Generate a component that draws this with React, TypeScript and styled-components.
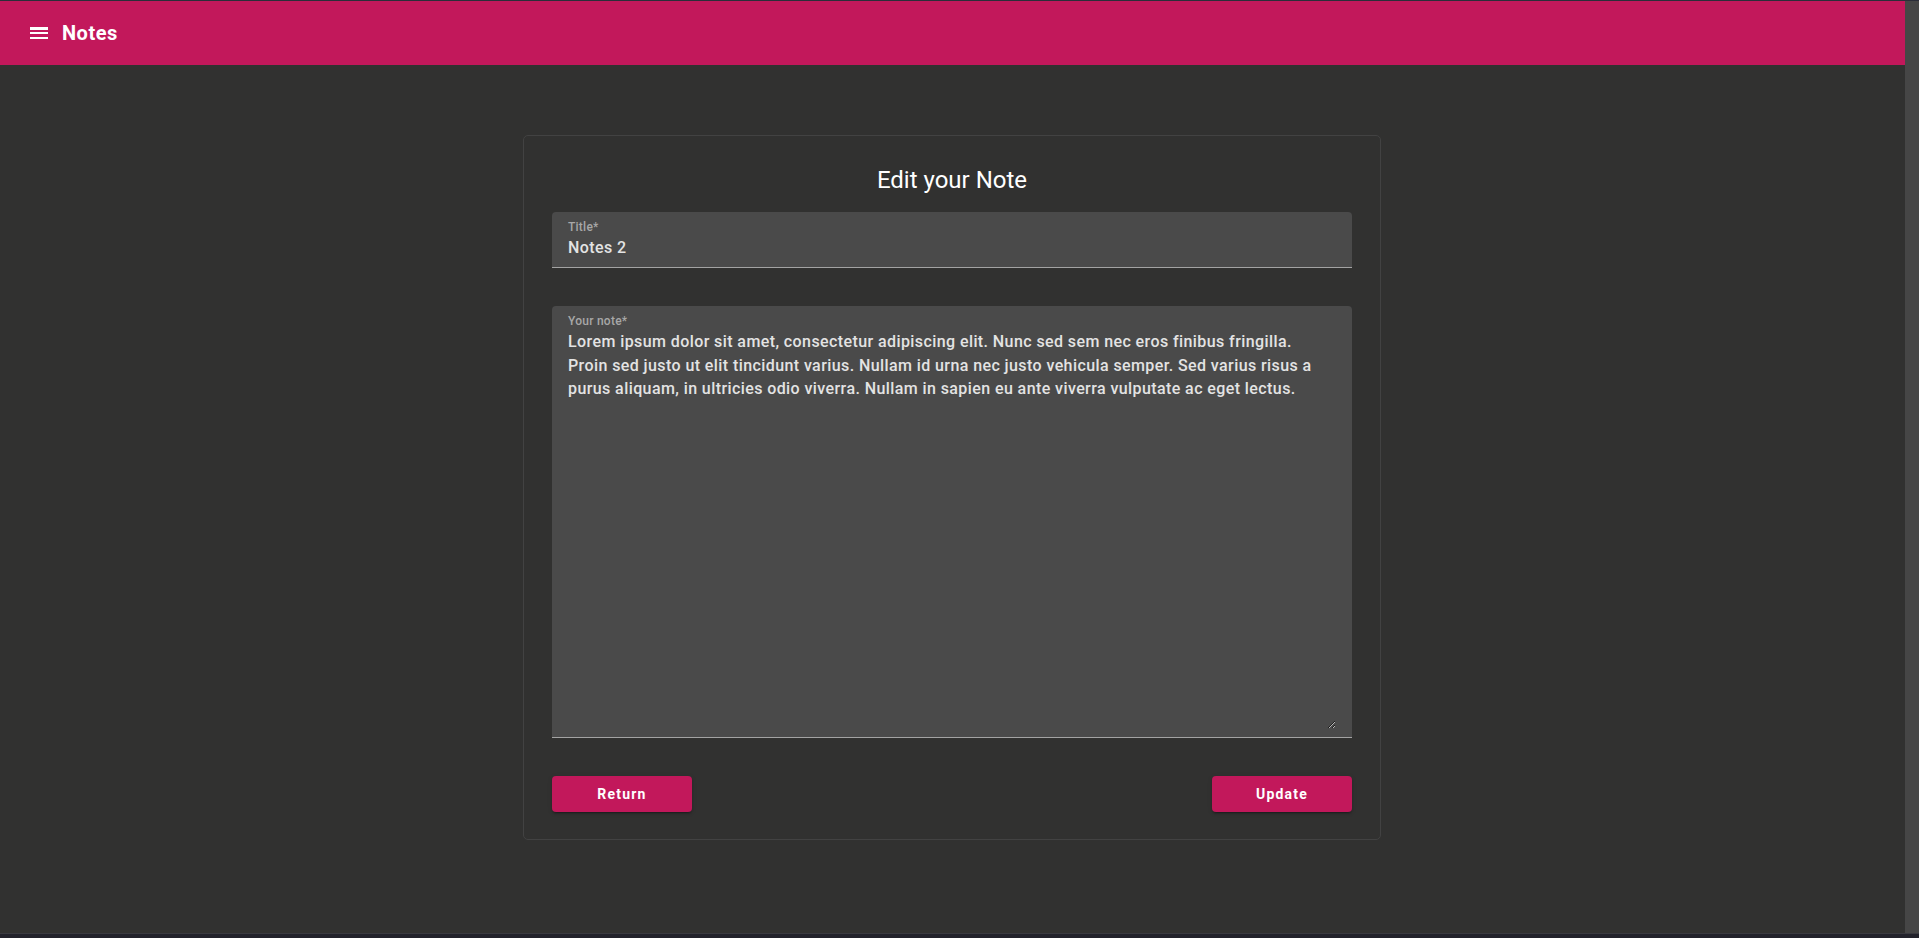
import React from "react";
import styled, { createGlobalStyle } from "styled-components";

const GlobalStyle = createGlobalStyle`
  html, body {
    margin: 0;
    padding: 0;
    height: 100%;
    overflow: hidden;
    background: #313130;
    font-family: Roboto, "Liberation Sans", Arial, sans-serif;
  }
  #root { height: 100%; }
  * { box-sizing: border-box; }
`;

const Frame = styled.div`
  height: 100vh;
  display: flex;
  flex-direction: column;
`;

const TopEdge = styled.div`
  height: 1px;
  background: #2b2d39;
  flex: none;
`;

const BottomEdge = styled.div`
  height: 5px;
  background: #22222b;
  border-top: 1px solid #3a3a40;
  flex: none;
`;

const Window = styled.div`
  flex: 1;
  display: flex;
  min-height: 0;
`;

const Viewport = styled.div`
  flex: 1;
  display: flex;
  flex-direction: column;
  background: #313130;
`;

const ScrollTrack = styled.div`
  width: 14px;
  flex: none;
  background: #464646;
`;

const AppBar = styled.header`
  height: 64px;
  flex: none;
  background: #c2185b;
  display: flex;
  align-items: center;
  padding-left: 27px;
  gap: 11px;
  color: #fff;
`;

const MenuIcon = styled.svg`
  width: 24px;
  height: 24px;
  fill: #fff;
  display: block;
`;

const Brand = styled.h1`
  margin: 0;
  font-size: 20px;
  font-weight: 700;
  line-height: 1.6;
  letter-spacing: 0.5px;
`;

const Content = styled.main`
  display: flex;
  justify-content: center;
  padding-top: 70px;
  padding-right: 1px;
`;

const Card = styled.form`
  width: 858px;
  border: 1px solid #424242;
  border-radius: 5px;
  padding: 28px 28px 27px;
  display: flex;
  flex-direction: column;
`;

const Heading = styled.h2`
  margin: 0 0 16px;
  text-align: center;
  color: #fff;
  font-size: 24px;
  font-weight: 400;
  line-height: 32px;
`;

const Field = styled.label`
  display: flex;
  flex-direction: column;
  gap: 2px;
  background: #4a4a4a;
  border-radius: 4px 4px 0 0;
  border-bottom: 1px solid #a3a3a3;
  padding: 8px 16px 8px;
  margin-bottom: 38px;
`;

const FieldLabel = styled.span`
  font-size: 12px;
  line-height: 14px;
  font-weight: 500;
  letter-spacing: 0.25px;
  color: #a7a7a7;
`;

const TextInput = styled.input`
  border: 0;
  outline: none;
  background: transparent;
  padding: 0;
  margin: 0;
  font-family: inherit;
  font-size: 16px;
  font-weight: 500;
  letter-spacing: 0.4px;
  line-height: 23px;
  height: 23px;
  color: #e3e3e3;
`;

const TextArea = styled.textarea`
  border: 0;
  outline: none;
  background: transparent;
  padding: 0;
  margin: 0;
  font-family: inherit;
  font-size: 16px;
  font-weight: 500;
  letter-spacing: 0.41px;
  line-height: 23.7px;
  height: 399px;
  color: #e3e3e3;
  resize: vertical;
  color-scheme: dark;
`;

const Actions = styled.div`
  display: flex;
  justify-content: space-between;
`;

const Button = styled.button`
  width: 140px;
  height: 36px;
  border: 0;
  border-radius: 4px;
  background: #c2185b;
  color: #fff;
  font-family: inherit;
  font-size: 14px;
  font-weight: 700;
  letter-spacing: 1.2px;
  cursor: pointer;
  box-shadow: 0px 3px 1px -2px rgba(0, 0, 0, 0.2), 0px 2px 2px 0px rgba(0, 0, 0, 0.14),
    0px 1px 5px 0px rgba(0, 0, 0, 0.12);
`;

const noteText = [
  "Lorem ipsum dolor sit amet, consectetur adipiscing elit. Nunc sed sem nec eros finibus fringilla.",
  "Proin sed justo ut elit tincidunt varius. Nullam id urna nec justo vehicula semper. Sed varius risus a",
  "purus aliquam, in ultricies odio viverra. Nullam in sapien eu ante viverra vulputate ac eget lectus.",
].join("\n");

export default function App() {
  return (
    <>
      <GlobalStyle />
      <Frame>
        <TopEdge />
        <Window>
          <Viewport>
            <AppBar>
              <MenuIcon viewBox="0 0 24 24" aria-hidden="true">
                <path d="M3 18h18v-2H3v2zm0-5h18v-2H3v2zm0-6v2h18V6H3z" />
              </MenuIcon>
              <Brand>Notes</Brand>
            </AppBar>
            <Content>
              <Card onSubmit={(e) => e.preventDefault()}>
                <Heading>Edit your Note</Heading>
                <Field>
                  <FieldLabel>Title*</FieldLabel>
                  <TextInput defaultValue="Notes 2" />
                </Field>
                <Field>
                  <FieldLabel>Your note*</FieldLabel>
                  <TextArea defaultValue={noteText} />
                </Field>
                <Actions>
                  <Button type="button">Return</Button>
                  <Button type="submit">Update</Button>
                </Actions>
              </Card>
            </Content>
          </Viewport>
          <ScrollTrack />
        </Window>
        <BottomEdge />
      </Frame>
    </>
  );
}
